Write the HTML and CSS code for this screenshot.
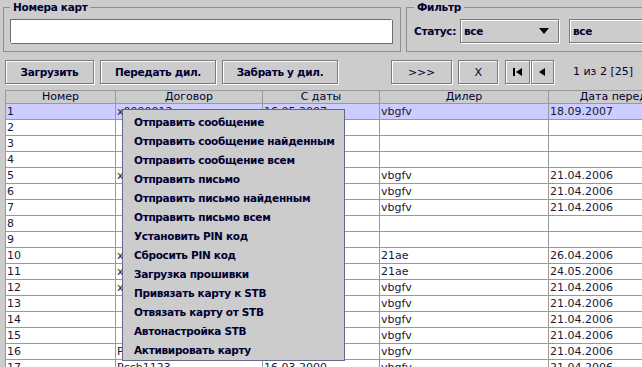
FILE: index.html
```html
<!DOCTYPE html>
<html lang="ru">
<head>
    <meta charset="UTF-8">
    <title>Карты</title>
    <link rel="stylesheet" href="styles.css">
</head>
<body>
    <!-- фильтры -->
    <div class="filters">
        <fieldset class="group cards">
            <legend>Номера карт</legend>
            <input type="text" class="card-input">
        </fieldset>
        <fieldset class="group filter">
            <legend>Фильтр</legend>
            <div class="filter-row">
                <span class="label">Статус:</span>
                <div class="combo status"><span>все</span><span class="arrow"></span></div>
                <div class="combo second"><span>все</span></div>
            </div>
        </fieldset>
    </div>

    <!-- кнопки -->
    <div class="actions">
        <button class="btn load">Загрузить</button>
        <button class="btn give">Передать дил.</button>
        <button class="btn take">Забрать у дил.</button>
        <button class="btn more">&gt;&gt;&gt;</button>
        <button class="btn clear">X</button>
        <button class="btn nav first">
            <svg width="9" height="8" viewBox="0 0 9 8"><rect x="0" y="0" width="2" height="8"/><polygon points="9,0 9,8 3,4"/></svg>
        </button>
        <button class="btn nav prev">
            <svg width="7" height="8" viewBox="0 0 7 8"><polygon points="6,0 6,8 0,4"/></svg>
        </button>
        <div class="pager">1 из 2 [25]</div>
    </div>

    <!-- таблица -->
    <div class="grid-wrap">
        <table class="grid">
            <colgroup>
                <col class="c-num">
                <col class="c-contract">
                <col class="c-from">
                <col class="c-dealer">
                <col class="c-date">
            </colgroup>
            <thead>
                <tr>
                    <th>Номер</th>
                    <th>Договор</th>
                    <th>С даты</th>
                    <th>Дилер</th>
                    <th>Дата передачи</th>
                </tr>
            </thead>
            <tbody id="rows"></tbody>
        </table>

        <!-- контекстное меню -->
        <div class="popup">
            <div class="item">Отправить сообщение</div>
            <div class="item">Отправить сообщение найденным</div>
            <div class="item">Отправить сообщение всем</div>
            <div class="item">Отправить письмо</div>
            <div class="item">Отправить письмо найденным</div>
            <div class="item">Отправить письмо всем</div>
            <div class="item">Установить PIN код</div>
            <div class="item">Сбросить PIN код</div>
            <div class="item">Загрузка прошивки</div>
            <div class="item">Привязать карту к STB</div>
            <div class="item">Отвязать карту от STB</div>
            <div class="item">Автонастройка STB</div>
            <div class="item">Активировать карту</div>
        </div>
    </div>

    <script>
        // строки таблицы
        const rows = [
            ['1', 'x0000012', '16.05.2007', 'vbgfv', '18.09.2007'],
            ['2', '', '', '', ''],
            ['3', '', '', '', ''],
            ['4', '', '', '', ''],
            ['5', 'x0000005', '12.04.2006', 'vbgfv', '21.04.2006'],
            ['6', '', '', 'vbgfv', '21.04.2006'],
            ['7', '', '', 'vbgfv', '21.04.2006'],
            ['8', '', '', '', ''],
            ['9', '', '', '', ''],
            ['10', 'x0000010', '12.04.2006', '21ae', '26.04.2006'],
            ['11', 'x0000011', '12.04.2006', '21ae', '24.05.2006'],
            ['12', 'x0000012', '12.04.2006', 'vbgfv', '21.04.2006'],
            ['13', '', '', 'vbgfv', '21.04.2006'],
            ['14', '', '', 'vbgfv', '21.04.2006'],
            ['15', '', '', 'vbgfv', '21.04.2006'],
            ['16', 'Pcch1122', '16.03.2000', 'vbgfv', '21.04.2006'],
            ['17', 'Pcch1123', '16.03.2000', 'vbgfv', '21.04.2006']
        ];

        const body = document.getElementById('rows');
        rows.forEach(function (r, i) {
            const tr = document.createElement('tr');
            if (i === 0) tr.className = 'selected';
            r.forEach(function (v) {
                const td = document.createElement('td');
                td.textContent = v;
                tr.appendChild(td);
            });
            body.appendChild(tr);
        });
    </script>
</body>
</html>
```

FILE: styles.css
```css
:root {
    --panel-bg: #cccccc;
    --grid-line: #999999;
    --btn-dark: #7a7a7a;
    --select-bg: #ccccff;
    --menu-border: #66668a;
}

* {
    box-sizing: border-box;
}

body {
    margin: 0;
    width: 642px;
    height: 367px;
    overflow: hidden;
    background: var(--panel-bg);
    font-family: "DejaVu Sans", "Liberation Sans", sans-serif;
    font-size: 11px;
    color: #000;
}

/* жирный текст Metal */
.group legend,
.label,
.combo,
.btn,
.popup .item {
    font-size: 10.5px;
    font-weight: bold;
    letter-spacing: -0.3px;
    color: #000033;
}

/* группы */
.filters {
    display: flex;
    gap: 5px;
    padding: 1px 0 0 3px;
}

.group {
    margin: 0;
    border: 1px solid #8e8e8e;
    min-width: 0;
    flex-shrink: 0;
}

.group legend {
    padding: 0 3px;
    line-height: 13px;
}

.cards {
    width: 398px;
    padding: 5px 8px 8px 6px;
}

.card-input {
    display: block;
    width: 382px;
    height: 24px;
    margin: 0;
    border: 1px solid #6e6e6e;
    border-right-color: #fff;
    border-bottom-color: #fff;
    box-shadow: 1px 1px 0 #6e6e6e;
    background: #fff;
}

.filter {
    width: 260px;
    padding: 5px 0 8px 7px;
}

.filter-row {
    display: flex;
    align-items: center;
    height: 24px;
}

.label {
    width: 46px;
    flex-shrink: 0;
}

.combo {
    display: flex;
    align-items: center;
    justify-content: space-between;
    flex-shrink: 0;
    height: 24px;
    padding: 0 9px 0 3px;
    border: 1px solid var(--btn-dark);
    box-shadow: inset 1px 1px 0 #fff, 1px 1px 0 #fff;
}

.combo.status {
    width: 99px;
}

.combo.second {
    width: 90px;
    margin-left: 10px;
}

.arrow {
    width: 0;
    height: 0;
    border-left: 5px solid transparent;
    border-right: 5px solid transparent;
    border-top: 6px solid #000;
}

/* кнопки */
.actions {
    display: flex;
    align-items: center;
    margin-top: 8px;
    padding-left: 5px;
    height: 24px;
}

.btn {
    flex-shrink: 0;
    height: 24px;
    margin: 0;
    padding: 0;
    font-family: inherit;
    background: var(--panel-bg);
    border: 1px solid var(--btn-dark);
    box-shadow: inset 1px 1px 0 #fff, 1px 1px 0 #fff;
    display: flex;
    align-items: center;
    justify-content: center;
}

.btn.load { width: 89px; }
.btn.give { width: 116px; margin-left: 6px; }
.btn.take { width: 116px; margin-left: 6px; }
.btn.more { width: 61px; margin-left: 53px; font-weight: normal; font-size: 11px; }
.btn.clear { width: 40px; margin-left: 6px; font-weight: normal; font-size: 11px; }
.btn.first { width: 25px; margin-left: 7px; }
.btn.prev { width: 23px; margin-left: 1px; }

.pager {
    width: 98px;
    height: 24px;
    line-height: 24px;
    text-align: center;
    flex-shrink: 0;
    color: #000033;
}

/* таблица */
.grid-wrap {
    position: relative;
    margin-top: 6px;
    padding-left: 5px;
    width: 720px;
}

.grid {
    border-collapse: separate;
    border-spacing: 0;
    table-layout: fixed;
    width: 694px;
}

.c-num { width: 111px; }
.c-contract { width: 147px; }
.c-from { width: 117px; }
.c-dealer { width: 169px; }
.c-date { width: 150px; }

.grid th {
    height: 14px;
    padding: 0;
    font-weight: normal;
    line-height: 12px;
    text-align: center;
    background: var(--panel-bg);
    color: #000033;
    border-top: 1px solid var(--grid-line);
    border-bottom: 1px solid var(--grid-line);
    border-right: 1px solid var(--grid-line);
    white-space: nowrap;
    overflow: hidden;
}

.grid th:first-child,
.grid td:first-child {
    border-left: 1px solid var(--grid-line);
}

.grid td {
    height: 16px;
    padding: 0 1px;
    line-height: 15px;
    background: #fff;
    color: #1a1a33;
    border-right: 1px solid var(--grid-line);
    border-bottom: 1px solid var(--grid-line);
    white-space: nowrap;
    overflow: hidden;
}

.grid tr.selected td {
    background: var(--select-bg);
}

/* меню */
.popup {
    position: absolute;
    left: 122px;
    top: 19px;
    width: 223px;
    padding: 3px 0 0;
    background: var(--panel-bg);
    border: 1px solid var(--menu-border);
}

.popup .item {
    height: 19px;
    line-height: 19px;
    padding-left: 11px;
    white-space: nowrap;
}
```
